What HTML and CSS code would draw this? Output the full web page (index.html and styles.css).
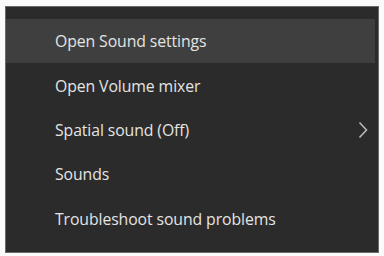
FILE: index.html
```html
<!DOCTYPE html>
<html>
<head>
<meta charset="utf-8">
<link rel="stylesheet" href="styles.css">
</head>
<body>
<div class="menu">
  <div class="item active"><span class="label">Open Sound settings</span></div>
  <div class="item"><span class="label">Open Volume mixer</span></div>
  <div class="item"><span class="label">Spatial sound (Off)</span>
    <svg class="chev" width="10" height="18" viewBox="0 0 10 18"><path d="M1.5 1.5 L8.5 9 L1.5 16.5" fill="none" stroke="#b8b8b8" stroke-width="1.6"/></svg>
  </div>
  <div class="item"><span class="label">Sounds</span></div>
  <div class="item"><span class="label">Troubleshoot sound problems</span></div>
</div>
</body>
</html>
```
FILE: styles.css
```css
html, body {
  margin: 0;
  background: #fbfbfb;
}
body {
  padding: 6px 0 0 5px;
  width: 384px;
  height: 256px;
  box-sizing: border-box;
}
.menu {
  width: 374px;
  height: 247px;
  box-sizing: border-box;
  background: #2b2b2b;
  border: 1px solid #6a6a6a;
  padding: 12px 3px 11px 0;
  display: flex;
  flex-direction: column;
}
.item {
  height: 44.6px;
  display: flex;
  align-items: center;
  padding-left: 49px;
  padding-right: 7px;
  color: #e4e4e4;
  font-family: "Open Sans", "Noto Sans", sans-serif;
  font-size: 15.8px;
  font-weight: 500;
  letter-spacing: -0.1px;
}
.item.active {
  background: #3f3f3f;
}
.label {
  flex: 1;
}
.chev {
  display: block;
}
```
